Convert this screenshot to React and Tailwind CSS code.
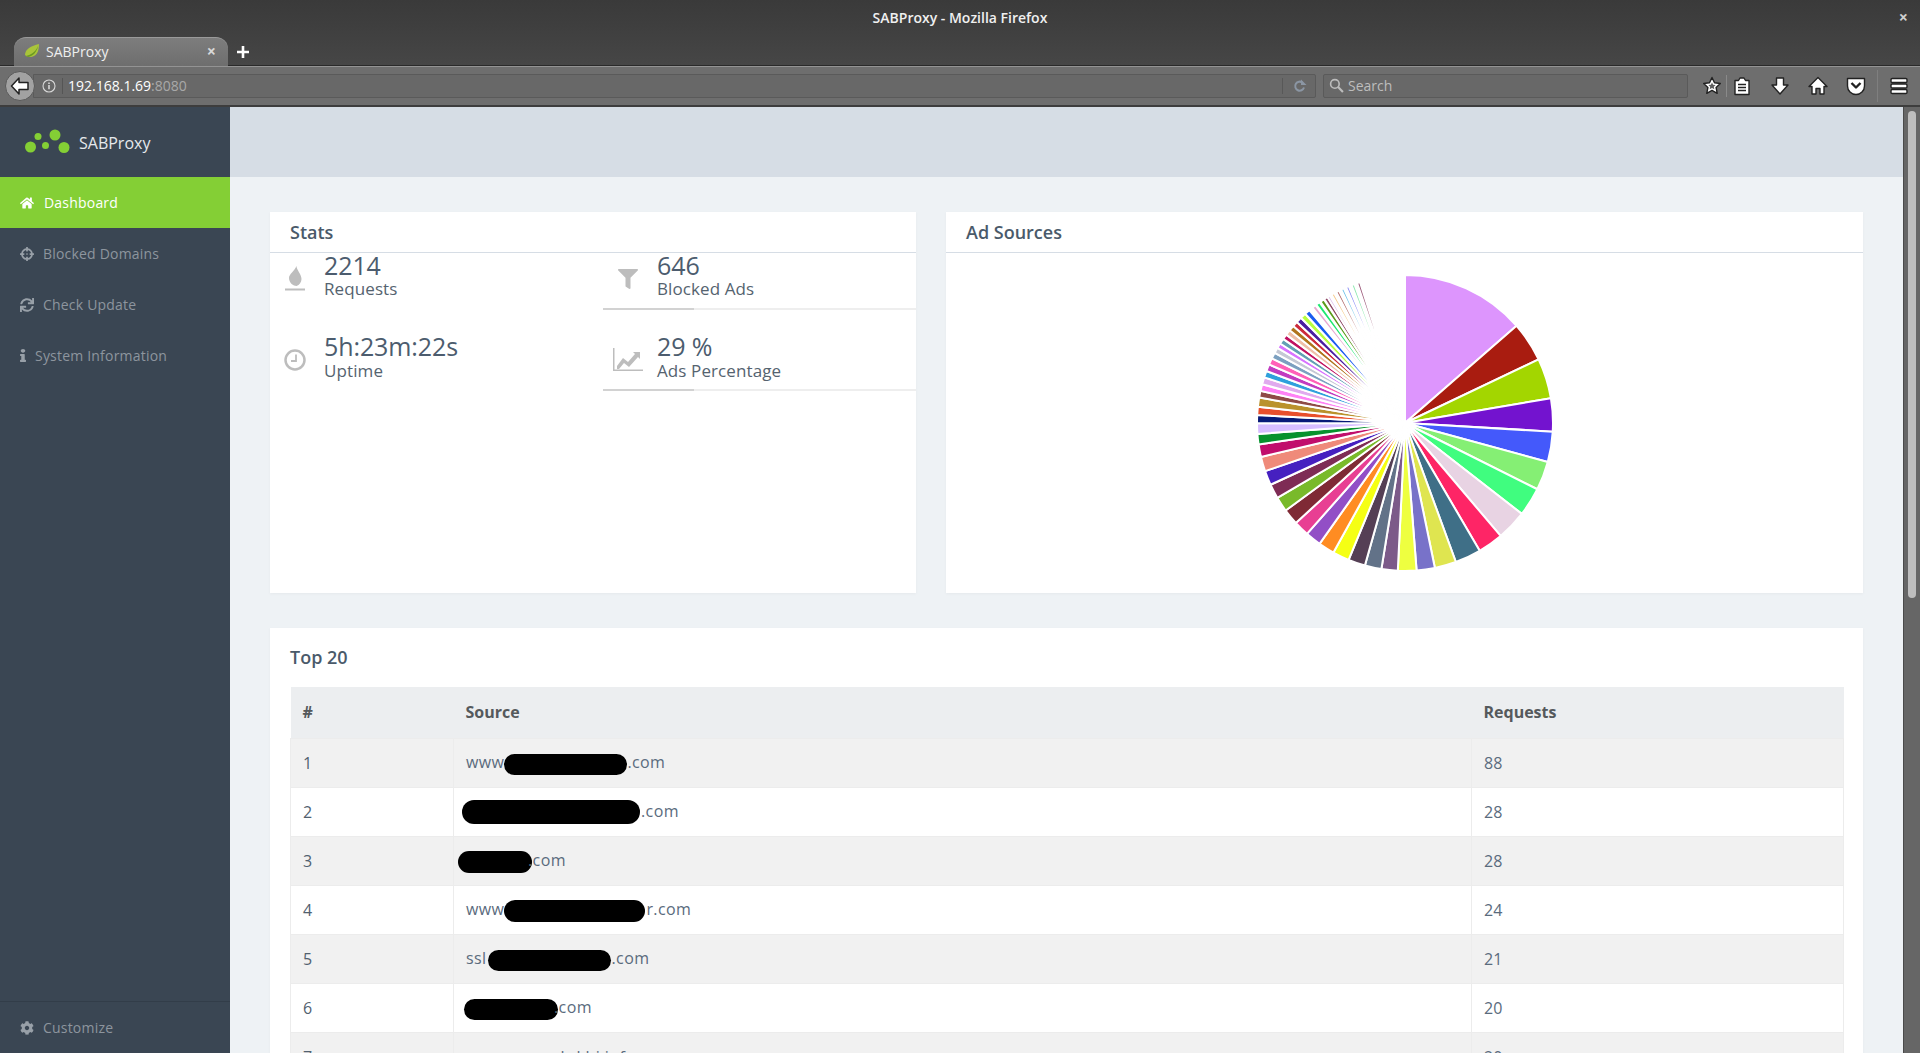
import React from "react";
import { FaHome, FaCrosshairs, FaSync, FaInfo, FaCog, FaFilter } from "react-icons/fa";

// Slice ends as rim points measured on the chart (pie centre at 493.5, 489 in that measure).
const BIG = [
  [825, 200, "#dd95fd"], [890, 300, "#a91c10"], [928, 415, "#a3d600"], [935, 515, "#7313cf"], [918, 605, "#4459fb"],
  [885, 685, "#85ef74"], [838, 757, "#40fd7f"], [778, 825, "#e8d3e3"], [715, 868, "#fe2566"], [645, 903, "#3f6f87"],
  [582, 918, "#dfe550"], [528, 928, "#7872c9"], [472, 930, "#eeff40"], [423, 925, "#7c5a89"], [375, 910, "#627288"],
  [327, 893, "#553f55"], [283, 870, "#f5ff14"], [243, 843, "#ff8c22"], [205, 815, "#924fc6"], [170, 785, "#e83f93"],
  [140, 748, "#7f2a35"], [116, 710, "#79ba2a"], [95, 672, "#7e2c55"], [78, 632, "#4620c0"], [65, 590, "#ef8a7a"],
  [58, 553, "#c10e6c"], [53, 522, "#07922d"], [52, 490, "#d6bdff"], [52, 465, "#071a78"], [53, 440, "#e84f2c"],
  [57, 413, "#ba922c"], [62, 393, "#8f4a46"], [66, 373, "#ff82f5"], [71, 352, "#e0aaee"], [78, 333, "#2fa0dc"],
  [85, 313, "#c23cc0"], [94, 295, "#ff60b8"], [102, 278, "#7ca0c0"], [110, 263, "#c4c8d4"], [118, 250, "#d873ff"],
  [127, 236, "#62a0b4"], [136, 223, "#c01060"], [147, 210, "#efbfa8"], [157, 197, "#b0741c"], [168, 185, "#cc2a3c"],
  [181, 173, "#4a1ea0"], [193, 160, "#b8ff40"], [206, 150, "#1a5cf0"],
];

const THIN = [
  [322, 1.5, "#e8a8d0"], [323.9, 1.6, "#1fe870"], [325.9, 1.6, "#5a9a1a"], [327.7, 1.5, "#8f4a66"],
  [328.9, 1.05, "#dcb8e8"], [330.8, 1.15, "#f5c98a"], [332.9, 1.15, "#b06a6a"], [335, 1.15, "#6cc0e8"],
  [337.1, 1.15, "#8a8cf5"], [339.4, 1.15, "#8ee8b0"], [341.7, 1.15, "#9c5a7a"],
];

const CX = 150;
const CY = 152;
const R = 148;

function pt(deg) {
  const a = (deg * Math.PI) / 180;
  return `${(CX + R * Math.sin(a)).toFixed(2)} ${(CY - R * Math.cos(a)).toFixed(2)}`;
}

function angle(x, y) {
  const deg = (Math.atan2(x - 493.5, 489 - y) * 180) / Math.PI;
  return deg < 0 ? deg + 360 : deg;
}

function Wedge({ from, to, color }) {
  return (
    <path
      d={`M${CX} ${CY}L${pt(from)}A${R} ${R} 0 0 1 ${pt(to)}Z`}
      fill={color}
      stroke="#fff"
      strokeWidth="2"
      strokeLinejoin="round"
    />
  );
}

function Pie() {
  let start = 0;
  const big = BIG.map(([x, y, color]) => {
    const end = angle(x, y);
    const el = <Wedge key={color + x} from={start} to={end} color={color} />;
    start = end;
    return el;
  });
  const thin = THIN.map(([c, w, color]) => <Wedge key={c} from={c - w / 2} to={c + w / 2} color={color} />);
  return (
    <svg width="300" height="304" viewBox="0 0 300 304">
      {big}
      {thin}
    </svg>
  );
}

function Blob({ w, ml = 0, mr = 0, h = 21 }) {
  return (
    <span
      className="inline-block bg-black rounded-full align-middle"
      style={{ width: w, height: h, marginLeft: ml, marginRight: mr }}
    />
  );
}

const ROWS = [
  ["1", <>www<Blob w={123} ml={0} mr={0} /><span>.com</span></>, "88"],
  ["2", <><Blob w={178} ml={-4} mr={1} h={24} /><span>.com</span></>, "28"],
  ["3", <><Blob w={74} ml={-8} mr={-4} h={22} /><span>.com</span></>, "28"],
  ["4", <>www<Blob w={141} ml={0} mr={1} h={22} /><span>r.com</span></>, "24"],
  ["5", <>ssl<Blob w={123} ml={1} mr={1} /><span>.com</span></>, "21"],
  ["6", <><Blob w={94} ml={-2} mr={-4} /><span>.com</span></>, "20"],
  ["7", <>www.ocean.bd.hi.info</>, "20"],
];

function NavItem({ icon, label, active, gap = 10 }) {
  return (
    <div
      className={`h-[51px] flex items-center pl-5 text-[14px] tracking-[0.2px] ${active ? "bg-[#84cf35] text-white" : "text-[#8d959e]"}`}
    >
      <span className={active ? "text-white text-[14px]" : "text-[#98a0a8] text-[14px]"}>{icon}</span>
      <span style={{ marginLeft: gap }}>{label}</span>
    </div>
  );
}

function ToolIcon({ children, w = 20 }) {
  return (
    <svg width={w} height="20" viewBox="0 0 20 20" fill="#fff" stroke="#222222" strokeWidth="1.4" strokeLinejoin="round" className="shrink-0">
      {children}
    </svg>
  );
}

function Stat({ icon, value, label, pt, h, bar, labelGap = 1 }) {
  return (
    <div className="relative flex" style={{ height: h, paddingTop: pt }}>
      <div className="w-[50px] mr-1 h-[46px] pt-[7px] flex items-center justify-center text-[#bdbdbd]">{icon}</div>
      <div>
        <div className="text-[25px] leading-[26px] tracking-[-0.1px] text-[#4c5c6e]">{value}</div>
        <div className="text-[17px] leading-[22px] tracking-[0.1px] text-[#55636f]" style={{ marginTop: labelGap }}>{label}</div>
      </div>
      {bar && (
        <div className="absolute left-0 right-0 bottom-0 h-[2px] bg-[#eeeeee]">
          <div className="h-full w-[29%] bg-[#d2d2d2]" />
        </div>
      )}
    </div>
  );
}

function Heading({ children }) {
  return (
    <h2 className="h-[41px] border-b border-[#d6dde5] pl-5 pt-[1px] flex items-center text-[18px] font-semibold text-[#4a5a6a]">
      {children}
    </h2>
  );
}

export default function App() {
  return (
    <div className="w-[1920px] h-[1053px] overflow-hidden flex flex-col font-['Open_Sans',sans-serif]">
      {/* Window title + tabs */}
      <div className="h-[66px] shrink-0 flex flex-col bg-gradient-to-b from-[#3a3a3a] to-[#464646] border-b border-[#2a2a2a] text-white">
        <div className="h-[37px] flex items-center justify-center relative pb-[2px]">
          <span className="text-[14px] text-[#f0f0f0] font-semibold">SABProxy - Mozilla Firefox</span>
          <span className="absolute right-[12px] top-[7px] text-[16px] text-[#d0d0d0] font-bold leading-[20px]">×</span>
        </div>
        <div className="flex items-start pl-[14px] h-[28px]">
          <div className="w-[214px] h-[29px] rounded-t-[12px] bg-gradient-to-b from-[#7d7d7d] to-[#6e6e6e] border-t border-[#9a9a9a] flex items-center pl-[10px] pr-[12px] pb-[2px] text-[14px] text-[#efefef]">
            <svg width="16" height="16" viewBox="0 0 16 16" className="shrink-0">
              <path d="M1 12C1 6 7 3 15 1c0 8-3 13-9 13-2 0-4-1-5-2z" fill="#a9c43a" />
              <path d="M2 13c4-1 9-3 12-10-1 6-5 10-10 11z" fill="#6b9a22" />
            </svg>
            <span className="ml-[6px]">SABProxy</span>
            <span className="ml-auto text-[16px] font-bold text-[#d8d8d8] leading-none">×</span>
          </div>
          <svg width="14" height="14" viewBox="0 0 14 14" className="ml-[8px] mt-[8px]" fill="#fff">
            <path d="M5.7 1h2.6v4.7H13v2.6H8.3V13H5.7V8.3H1V5.7h4.7z" />
          </svg>
        </div>
      </div>

      {/* Nav bar */}
      <div className="h-[41px] shrink-0 bg-[#6e6e6e] border-t border-[#939393] border-b-2 border-b-[#3d3d3d] flex items-center pr-[10px] relative">
        <div className="ml-[5px] w-[30px] h-[30px] rounded-full bg-[#a2a2a2] border border-[#5a5a5a] flex items-center justify-center z-10 shrink-0">
          <svg width="20" height="18" viewBox="0 0 20 18">
            <path d="M9 1 1.500 9 9 17v-4.500h9v-7H9z" fill="#fff" stroke="#222" strokeWidth="1.500" strokeLinejoin="round" />
          </svg>
        </div>
        <div className="w-[1283px] -ml-[2px] h-[24px] bg-[#686868] border border-[#5a5a5a] rounded-r-[2px] flex items-center text-[14px] pb-[1px] shrink-0">
          <svg width="14" height="14" viewBox="0 0 14 14" className="ml-[8px] shrink-0" fill="none" stroke="#d8d8d8">
            <circle cx="7" cy="7" r="6" strokeWidth="1.1" />
            <path d="M7 6v4.2M7 3.400v1.500" strokeWidth="1.600" />
          </svg>
          <span className="ml-[6px] w-[1px] h-[16px] bg-[#555]" />
          <span className="ml-[5px] text-white">192.168.1.69</span>
          <span className="text-[#a8a8a8]">:8080</span>
          <span className="ml-auto mr-[32px] w-[1px] h-[16px] bg-[#585858]" />
          <svg width="14" height="14" viewBox="0 0 14 14" className="absolute left-[1293px]" fill="none" stroke="#8b96a4" strokeWidth="2">
            <path d="M11 8.500A4.500 4.500 0 1 1 9.500 3.600" />
            <path d="M8 0.500v5.500h5.500z" fill="#8b96a4" stroke="none" />
          </svg>
        </div>
        <div className="ml-[7px] w-[365px] h-[24px] bg-[#686868] border border-[#5a5a5a] rounded-[2px] flex items-center text-[14px] text-[#bdbdbd] pb-[1px] shrink-0">
          <svg width="15" height="15" viewBox="0 0 14 14" className="ml-[5px]" fill="none" stroke="#bdbdbd" strokeWidth="1.500">
            <circle cx="5.500" cy="5.500" r="4" />
            <path d="M8.500 8.500l4.500 4.500" strokeWidth="2" />
          </svg>
          <span className="ml-[4px]">Search</span>
        </div>
        <div className="ml-[14px] flex items-center shrink-0">
          <ToolIcon>
            <path d="M10 1.500l2.500 5.300 5.800.7-4.200 4 1.100 5.800-5.200-2.900-5.200 2.900 1.100-5.800-4.200-4 5.800-.7z" />
            <path d="M10 6.500l1.100 2.300 2.500.3-1.800 1.700.5 2.500-2.300-1.200-2.300 1.200.5-2.500-1.800-1.700 2.500-.3z" fill="#5f5f5f" stroke="none" />
          </ToolIcon>
          <span className="w-[1px] h-[22px] bg-[#8a8a8a] ml-[4px] mr-[5px]" />
          <ToolIcon>
            <path d="M3 4.500h3.500l1.500-2.500h4l1.500 2.500H17v14H3z" />
            <path d="M6 8.500h8M6 11.500h8M6 14.500h8" stroke="#222222" strokeWidth="1.600" fill="none" />
          </ToolIcon>
          <div className="w-[18px]" />
          <ToolIcon>
            <path d="M6.500 2h7v7H18l-8 9-8-9h4.500z" />
          </ToolIcon>
          <div className="w-[18px]" />
          <ToolIcon>
            <path d="M10 1.500l9 9h-3V18h-4v-5.500H8V18H4v-7.500H1z" />
          </ToolIcon>
          <div className="w-[18px]" />
          <ToolIcon>
            <path d="M1.500 2.500h17v7.500a8.500 8.500 0 0 1-17 0z" />
            <path d="M5.500 7l4.500 4.500L14.500 7" fill="none" stroke="#222222" strokeWidth="2.400" />
          </ToolIcon>
          <span className="w-[1px] h-[32px] bg-[#7f7f7f] ml-[11px] mr-[11px]" />
          <ToolIcon>
            <rect x="2" y="2.500" width="16" height="4" rx="1.200" />
            <rect x="2" y="8" width="16" height="4" rx="1.200" />
            <rect x="2" y="13.500" width="16" height="4" rx="1.200" />
          </ToolIcon>
        </div>
      </div>

      {/* Page */}
      <div className="flex-1 min-h-0 flex">
        <aside className="w-[230px] shrink-0 bg-[#3a4653] flex flex-col">
          <div className="h-[70px] flex items-center pl-[25px]">
            <svg width="46" height="26" viewBox="0 0 46 26" fill="#84cf35" className="shrink-0">
              <circle cx="5.500" cy="18" r="5.500" />
              <circle cx="13" cy="7.500" r="3.500" />
              <circle cx="20.500" cy="16.500" r="3.500" />
              <circle cx="30" cy="6" r="5.500" />
              <circle cx="39" cy="18.500" r="5.500" />
            </svg>
            <span className="ml-[8px] pt-[2px] text-[16px] text-[#e6e9ec]">SABProxy</span>
          </div>
          <NavItem active icon={<FaHome />} label="Dashboard" gap={10} />
          <NavItem icon={<FaCrosshairs />} label="Blocked Domains" gap={9} />
          <NavItem icon={<FaSync />} label="Check Update" gap={9} />
          <NavItem icon={<FaInfo className="w-[6px] h-[13px]" preserveAspectRatio="none" />} label="System Information" gap={9} />
          <div className="mt-auto h-[52px] border-t border-[#323d49] flex items-center pl-5 text-[14px] tracking-[0.2px] text-[#8d959e]">
            <FaCog className="text-[#98a0a8] text-[14px]" />
            <span className="ml-[9px]">Customize</span>
          </div>
        </aside>

        <main className="flex-1 min-w-0 bg-[#eef2f5] overflow-hidden">
          <div className="h-[70px] bg-[#d6dde5]" />
          <div className="px-10 pt-[35px]">
            <div className="grid grid-cols-[646px_917px] gap-x-[30px]">
              <section className="h-[381px] bg-white shadow-[0_1px_3px_rgba(0,0,0,0.04)]">
                <Heading>Stats</Heading>
                <div className="grid grid-cols-[333px_313px] -mt-[1px]">
                  <div>
                    <Stat
                      h={58}
                      pt={0}
                      labelGap={0}
                      value="2214"
                      label="Requests"
                      icon={
                        <svg width="20" height="25" viewBox="0 0 20 25" fill="#bdbdbd">
                          <path d="M11.500 0c0 4 5 8 5 13 0 3-2 6-5 7-3 0-7.500-3-7.500-8 0-4 5.500-7 7.500-12z" />
                          <rect x="0" y="22.500" width="20" height="2" />
                        </svg>
                      }
                    />
                    <Stat
                      h={81}
                      pt={23}
                      value="5h:23m:22s"
                      label="Uptime"
                      icon={
                        <svg width="22" height="22" viewBox="0 0 22 22" fill="none" stroke="#bdbdbd">
                          <circle cx="11" cy="11" r="9.500" strokeWidth="2.500" />
                          <path d="M12 5.500v6.500H7" strokeWidth="1.800" />
                        </svg>
                      }
                    />
                  </div>
                  <div>
                    <Stat h={58} pt={0} bar labelGap={0} value="646" label="Blocked Ads" icon={<FaFilter className="text-[20px]" />} />
                    <Stat
                      h={81}
                      pt={23}
                      bar
                      value="29 %"
                      label="Ads Percentage"
                      icon={
                        <svg width="30" height="24" viewBox="0 0 30 24" fill="#bdbdbd">
                          <path d="M0 0h1.500v21.500H30V23H0z" />
                          <path d="M4 18l6-8 5 4 7-8-2-2h7v7l-2-2-9 10-5-4-5 6H4z" />
                        </svg>
                      }
                    />
                  </div>
                </div>
              </section>
              <section className="h-[381px] bg-white shadow-[0_1px_3px_rgba(0,0,0,0.04)]">
                <Heading>Ad Sources</Heading>
                <div className="flex justify-center pt-[18px]">
                  <Pie />
                </div>
              </section>
            </div>

            <section className="mt-[35px] bg-white px-5 pt-[16px] shadow-[0_1px_3px_rgba(0,0,0,0.04)]">
              <h2 className="h-[26px] flex items-center text-[18px] font-semibold text-[#4a5a6a]">Top 20</h2>
              <table className="w-[1553px] mt-[17px] table-fixed border-collapse text-[16px] text-[#5a6b7d]">
                <colgroup>
                  <col className="w-[163px]" />
                  <col className="w-[1018px]" />
                  <col className="w-[372px]" />
                </colgroup>
                <thead>
                  <tr className="h-[51px] bg-[#eceef0] text-left text-[#55595c]">
                    <th className="pl-[12px] font-bold">#</th>
                    <th className="pl-[12px] font-bold">Source</th>
                    <th className="pl-[12px] font-bold">Requests</th>
                  </tr>
                </thead>
                <tbody>
                  {ROWS.map(([n, src, req], i) => (
                    <tr key={n} className={`h-[49px] ${i % 2 === 0 ? "bg-[#f1f1f1]" : "bg-white"}`}>
                      <td className="pl-[12px] border border-[#ececec] text-[#52616f]">{n}</td>
                      <td className="pl-[12px] border border-[#ececec] whitespace-nowrap tracking-[0.4px]">{src}</td>
                      <td className="pl-[12px] border border-[#ececec]">{req}</td>
                    </tr>
                  ))}
                </tbody>
              </table>
            </section>
          </div>
        </main>

        <div className="w-[17px] shrink-0 bg-[#666666] border-l border-[#4a4a4a] pt-[4px] flex justify-center">
          <div className="w-[8px] h-[487px] rounded-full bg-[#bebebe]" />
        </div>
      </div>
    </div>
  );
}
